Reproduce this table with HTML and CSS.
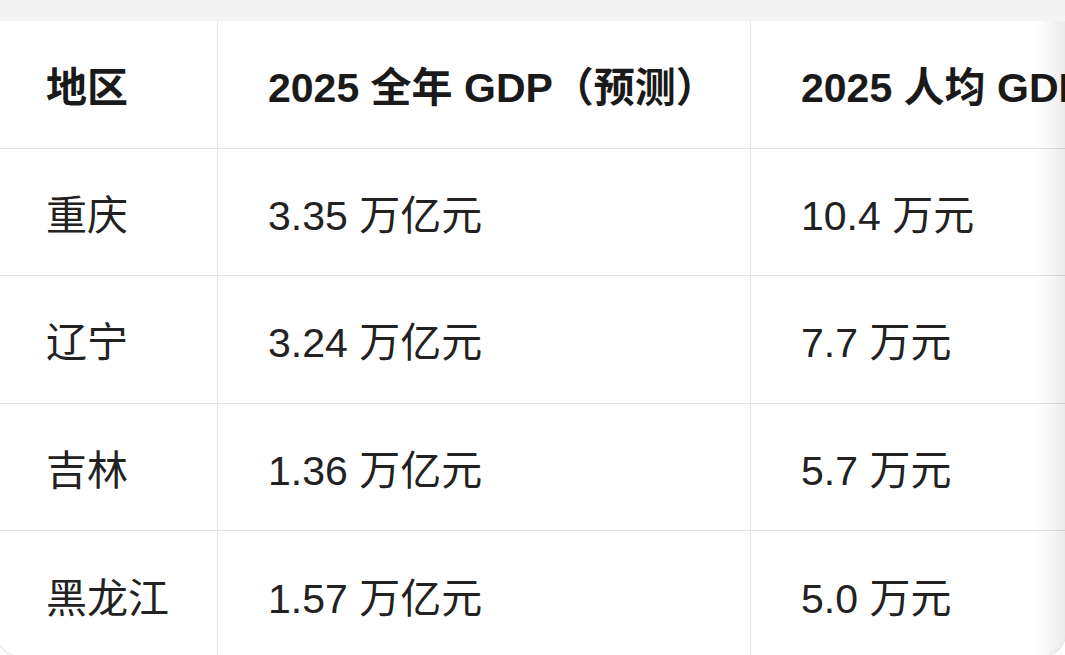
FILE: index.html
```html
<!DOCTYPE html>
<html lang="zh-CN">
<head>
<meta charset="utf-8">
<link rel="stylesheet" href="styles.css">
</head>
<body>
<div class="topbar"></div>
<div class="card">
  <div class="grid">
    <div class="cell head">地区</div>
    <div class="cell head">2025 全年 GDP（预测）</div>
    <div class="cell head last">2025 人均 GDP（预测）</div>

    <div class="cell">重庆</div>
    <div class="cell">3.35 万亿元</div>
    <div class="cell last">10.4 万元</div>

    <div class="cell">辽宁</div>
    <div class="cell">3.24 万亿元</div>
    <div class="cell last">7.7 万元</div>

    <div class="cell">吉林</div>
    <div class="cell">1.36 万亿元</div>
    <div class="cell last">5.7 万元</div>

    <div class="cell bottom">黑龙江</div>
    <div class="cell bottom">1.57 万亿元</div>
    <div class="cell bottom last">5.0 万元</div>
  </div>
  <div class="shade"></div>
</div>
</body>
</html>
```

FILE: styles.css
```css
html, body {
  margin: 0;
  padding: 0;
  background: #ffffff;
  overflow: hidden;
}

body {
  font-family: "Liberation Sans", "Noto Sans CJK SC", sans-serif;
  color: #1f1f1f;
}

.topbar {
  height: 21px;
  background: #f4f4f4;
}

.card {
  position: relative;
  margin-left: -5px;
  width: 1072px;
  height: 636px;
  background: #ffffff;
  border: 1px solid #e4e4e4;
  border-top: none;
  border-radius: 0 0 26px 26px;
  overflow: hidden;
  box-sizing: border-box;
}

.grid {
  display: grid;
  grid-template-columns: 222px 533px 620px;
  grid-auto-rows: 127.5px;
  width: 1375px;
}

.cell {
  display: flex;
  align-items: center;
  padding-left: 50px;
  font-size: 41px;
  white-space: nowrap;
  border-bottom: 1.5px solid #e3e3e3;
  border-right: 1.5px solid #e3e3e3;
  box-sizing: border-box;
  color: #222222;
}

.cell.last {
  border-right: none;
}

.cell.bottom {
  border-bottom: none;
}

.head {
  font-weight: bold;
  color: #1a1a1a;
}

.shade {
  position: absolute;
  top: 0;
  right: 0;
  bottom: 0;
  width: 30px;
  background: linear-gradient(to right, rgba(0,0,0,0), rgba(0,0,0,0.08));
  pointer-events: none;
}
```
